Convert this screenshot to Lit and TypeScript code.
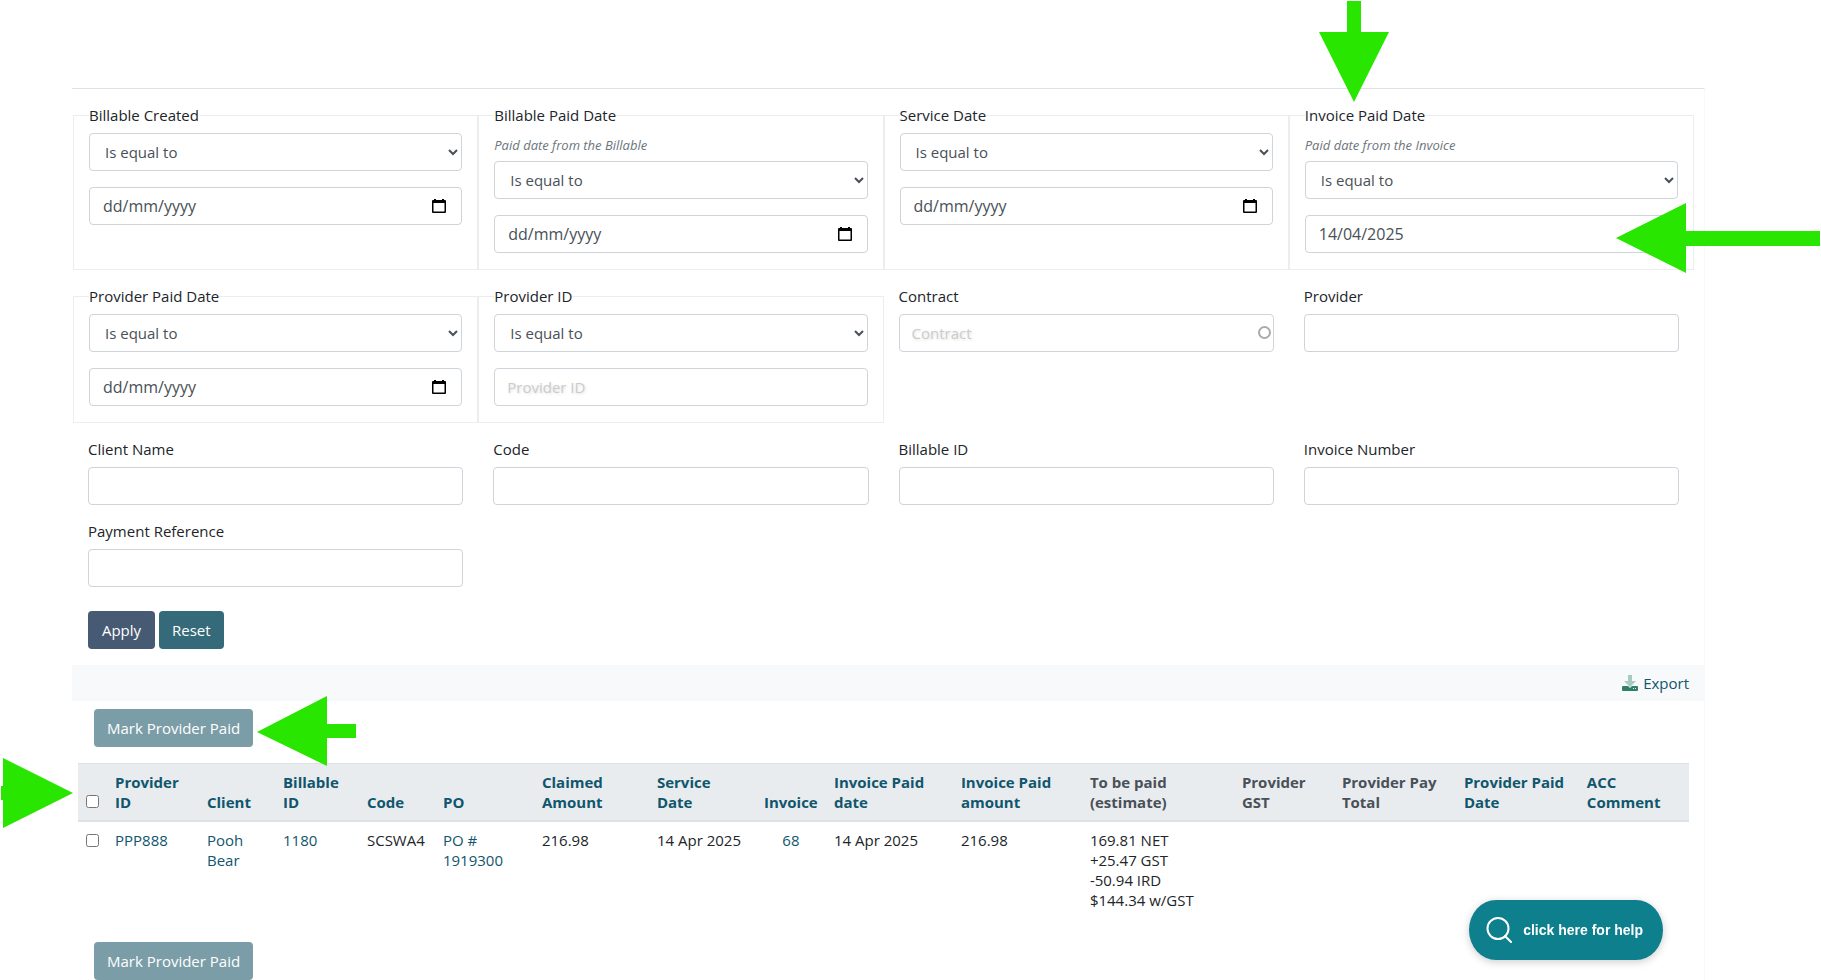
import { LitElement, html, css, nothing } from "lit";
import { customElement } from "lit/decorators.js";

interface Filter {
  id: string;
  label: string;
  kind: "date" | "compare" | "auto" | "text";
  hint?: string;
  value?: string;
}

const FILTERS: Filter[] = [
  { id: "billable-created", label: "Billable Created", kind: "date" },
  { id: "billable-paid", label: "Billable Paid Date", kind: "date", hint: "Paid date from the Billable" },
  { id: "service-date", label: "Service Date", kind: "date" },
  { id: "invoice-paid", label: "Invoice Paid Date", kind: "date", hint: "Paid date from the Invoice", value: "14/04/2025" },
  { id: "provider-paid", label: "Provider Paid Date", kind: "date" },
  { id: "provider-id", label: "Provider ID", kind: "compare" },
  { id: "contract", label: "Contract", kind: "auto" },
  { id: "provider", label: "Provider", kind: "text" },
  { id: "client-name", label: "Client Name", kind: "text" },
  { id: "code", label: "Code", kind: "text" },
  { id: "billable-id", label: "Billable ID", kind: "text" },
  { id: "invoice-number", label: "Invoice Number", kind: "text" },
  { id: "payment-reference", label: "Payment Reference", kind: "text" },
];

interface Column {
  label: string;
  share: number;
  sortable: boolean;
}

const COLUMNS: Column[] = [
  { label: "Provider ID", share: 92, sortable: true },
  { label: "Client", share: 76, sortable: true },
  { label: "Billable ID", share: 84, sortable: true },
  { label: "Code", share: 76, sortable: true },
  { label: "PO", share: 99, sortable: true },
  { label: "Claimed Amount", share: 115, sortable: true },
  { label: "Service Date", share: 107, sortable: true },
  { label: "Invoice", share: 70, sortable: true },
  { label: "Invoice Paid date", share: 127, sortable: true },
  { label: "Invoice Paid amount", share: 129, sortable: true },
  { label: "To be paid (estimate)", share: 152, sortable: false },
  { label: "Provider GST", share: 100, sortable: false },
  { label: "Provider Pay Total", share: 122, sortable: false },
  { label: "Provider Paid Date", share: 123, sortable: true },
  { label: "ACC Comment", share: 110, sortable: true },
];
const SHARE_TOTAL = COLUMNS.reduce((sum, c) => sum + c.share, 29);

@customElement("app-root")
export class AppRoot extends LitElement {
  static styles = css`
    :host {
      display: block;
      position: relative;
      overflow: hidden;
      min-height: 100vh;
      background: #fff;
      color: #212529;
      font: 15px/20px "Open Sans", "Noto Sans", sans-serif;
    }
    * { box-sizing: border-box; }
    a { color: #10566c; text-decoration: none; }
    .page {
      margin: 88px 116px 0 72px;
      border-top: 1px solid #dee2e6;
      border-right: 1px solid #f8f9fa;
    }
    .filters {
      display: grid;
      grid-template-columns: repeat(4, minmax(0, 1fr));
      row-gap: 16px;
      padding: 16px 10px 0 1px;
    }
    .group {
      min-width: 0;
      margin: 0;
      padding: 0 15px 16px;
      border: 1px solid #ebedef;
    }
    .field { padding: 0 15px; }
    .caption { display: block; padding: 0; margin: 0 0 8px; }
    .hint {
      margin: 0 0 4px;
      color: #6c757d;
      font-size: 13px;
      line-height: 24px;
      font-style: italic;
    }
    .control {
      display: block;
      width: 100%;
      height: 38px;
      padding: 0 12px;
      border: 1px solid #ced4da;
      border-radius: 4px;
      background: #fff;
      color: #495057;
      font: inherit;
    }
    select.control { padding: 0 0 0 11px; }
    .box { position: relative; }
    .group .box { margin-top: 16px; }
    .control::placeholder { color: #ccc; opacity: 1; text-shadow: 1px 1px 3px #ddd; }
    .date { padding: 0 13px; font-size: 16px; }
    .date::placeholder { color: #495057; text-shadow: none; }
    .picker {
      position: absolute;
      top: 9px;
      right: 13px;
      width: 20px;
      height: 20px;
      padding: 2px;
      border: 0;
      background: none;
    }
    .picker svg { display: block; }
    .ring {
      position: absolute;
      top: 12px;
      right: 3px;
      width: 13px;
      height: 13px;
      border: 2px solid #aaa;
      border-radius: 50%;
    }
    .actions { display: flex; gap: 4px; padding: 24px 16px 16px; }
    .btn {
      height: 38px;
      padding: 0 13px;
      border: 0;
      border-radius: 4px;
      color: #fff;
      font: inherit;
    }
    .apply { min-width: 67px; background: #465a73; }
    .reset { background: #346a79; }
    .mark { display: block; margin: 8px 22px 16px; background: #346a79; opacity: 0.65; }
    .mark.last { margin: 24px 22px 0; }
    .toolbar {
      display: flex;
      justify-content: flex-end;
      align-items: center;
      height: 36px;
      padding: 0 15px;
      background: #f7f9fb;
    }
    .export { display: flex; align-items: center; gap: 5px; }
    .scroll { padding: 0 15px 0 6px; }
    .data { width: 100%; table-layout: fixed; border-collapse: separate; border-spacing: 0; }
    .data th, .data td { padding: 8px; text-align: left; vertical-align: top; }
    .data th {
      vertical-align: bottom;
      background: #e9ecef;
      color: #495057;
      border-top: 1px solid #dee2e6;
      border-bottom: 2px solid #dee2e6;
    }
    .data .mid { text-align: center; }
    .nowrap { white-space: nowrap; }
    .tick { display: block; width: 13px; height: 13px; margin: 4px 0; }
    .help {
      position: fixed;
      right: 158px;
      bottom: 20px;
      display: flex;
      align-items: center;
      gap: 11px;
      height: 60px;
      padding: 0 20px 0 17px;
      border: 0;
      border-radius: 27px / 30px;
      background: #0e7f8c;
      color: #fff;
      font: bold 14px/20px "Liberation Sans", Arial, sans-serif;
      box-shadow: 0 2px 8px rgba(0, 0, 0, 0.2);
    }
    .arrow { position: absolute; fill: #28e600; pointer-events: none; }
    .to-legend { top: 1px; right: 432px; }
    .to-value { top: 203px; right: 1px; }
    .to-mark { top: 696px; left: 257px; }
    .to-select { top: 758px; left: 1px; }
  `;

  private operator(f: Filter) {
    return html`<select class="control" id=${f.id + "-op"} aria-label=${f.label + " operator"}>
      <option>Is equal to</option>
    </select>`;
  }

  private filter(f: Filter) {
    if (f.kind === "date" || f.kind === "compare") {
      const isDate = f.kind === "date";
      return html`<fieldset class="group">
        <legend class="caption">${f.label}</legend>
        ${f.hint ? html`<p class="hint">${f.hint}</p>` : nothing}
        ${this.operator(f)}
        <div class="box">
          <input class="control ${isDate ? "date" : ""}" id=${f.id} type="text" aria-label=${f.label}
            placeholder=${isDate ? "dd/mm/yyyy" : f.label} .value=${f.value ?? ""} />
          ${isDate
            ? html`<button class="picker" type="button" aria-label="Open calendar">
                <svg width="16" height="16" viewBox="0 0 16 16"><path d="M3 1h2v1h6V1h2v1h1q1 0 1 1v11q0 1-1 1H2q-1 0-1-1V3q0-1 1-1h1zM2.500 5v8.500h11V5z" fill-rule="evenodd"/></svg>
              </button>`
            : nothing}
        </div>
      </fieldset>`;
    }
    return html`<div class="field">
      <label class="caption" for=${f.id}>${f.label}</label>
      <div class="box">
        <input class="control" id=${f.id} type="text" placeholder=${f.kind === "auto" ? f.label : nothing} />
        ${f.kind === "auto" ? html`<span class="ring"></span>` : nothing}
      </div>
    </div>`;
  }

  private width(share: number) {
    return `width:${((share / SHARE_TOTAL) * 100).toFixed(3)}%`;
  }

  render() {
    return html`
      <main class="page">
        <form @submit=${(e: Event) => e.preventDefault()}>
          <div class="filters">${FILTERS.map((f) => this.filter(f))}</div>
          <div class="actions">
            <button class="btn apply" type="submit">Apply</button>
            <button class="btn reset" type="reset">Reset</button>
          </div>
        </form>
        <div class="toolbar">
          <a class="export" href="#export">
            <svg width="16" height="16" viewBox="0 0 16 16">
              <path fill="#a8cbc1" d="M6 0h4v6h4L8 12 2 6h4z"/>
              <path fill="#2f8066" d="M1 11h5l2 2 2-2h5q1 0 1 1v3q0 1-1 1H1q-1 0-1-1v-3q0-1 1-1z"/>
              <path fill="#e6f2ee" d="M11 13h1v1h-1zM13 13h1v1h-1z"/>
            </svg>
            Export
          </a>
        </div>
        <button class="btn mark" type="button">Mark Provider Paid</button>
        <div class="scroll">
          <table class="data">
            <colgroup>
              <col style=${this.width(29)} />
              ${COLUMNS.map((c) => html`<col style=${this.width(c.share)} />`)}
            </colgroup>
            <thead>
              <tr>
                <th><input class="tick" type="checkbox" aria-label="Select all rows" /></th>
                ${COLUMNS.map((c) => html`<th scope="col">${c.sortable ? html`<a href="#sort">${c.label}</a>` : c.label}</th>`)}
              </tr>
            </thead>
            <tbody>
              <tr>
                <td><input class="tick" type="checkbox" aria-label="Select PPP888" /></td>
                <td><a href="#provider">PPP888</a></td>
                <td><a href="#client">Pooh Bear</a></td>
                <td><a href="#billable">1180</a></td>
                <td>SCSWA4</td>
                <td><a href="#po">PO # 1919300</a></td>
                <td>216.98</td>
                <td class="nowrap">14 Apr 2025</td>
                <td class="mid"><a href="#invoice">68</a></td>
                <td class="nowrap">14 Apr 2025</td>
                <td>216.98</td>
                <td>169.81 NET<br />+25.47 GST<br />-50.94 IRD<br />$144.34 w/GST</td>
                <td></td>
                <td></td>
                <td></td>
                <td></td>
              </tr>
            </tbody>
          </table>
        </div>
        <button class="btn mark last" type="button">Mark Provider Paid</button>
      </main>

      <svg class="arrow to-legend" width="70" height="101" viewBox="0 0 70 101"><path d="M28 0h14v31h28L35 101 0 31h28z"/></svg>
      <svg class="arrow to-value" width="204" height="70" viewBox="0 0 204 70"><path d="M0 35 70 0v28h134v15H70v27z"/></svg>
      <svg class="arrow to-mark" width="99" height="70" viewBox="0 0 99 70"><path d="M0 36 70 0v28h29v14H70v28z"/></svg>
      <svg class="arrow to-select" width="72" height="70" viewBox="0 0 72 70"><path d="M72 35 2 70V42H0V28h2V0z"/></svg>

      <button class="help" type="button">
        <svg width="26" height="26" viewBox="0 0 26 26" fill="none" stroke="#fff" stroke-width="2" stroke-linecap="round">
          <circle cx="12" cy="11.500" r="10.500"/><path d="m19 19 6 6"/>
        </svg>
        click here for help
      </button>
    `;
  }
}
